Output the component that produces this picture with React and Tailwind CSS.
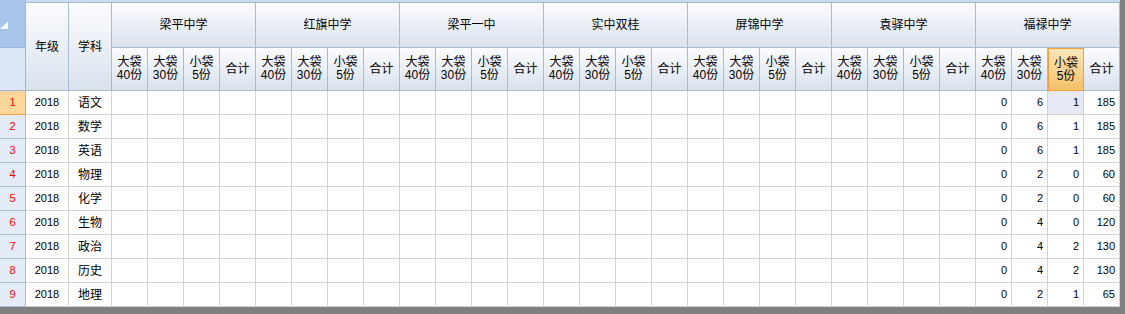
const SCHOOLS = ['梁平中学', '红旗中学', '梁平一中', '实中双桂', '屏锦中学', '袁驿中学', '福禄中学'];

const SUBS = [
    ['大袋', '40份'],
    ['大袋', '30份'],
    ['小袋', '5份'],
    ['合计'],
];

const ROWS = [
    ['语文', 0, 6, 1, 185],
    ['数学', 0, 6, 1, 185],
    ['英语', 0, 6, 1, 185],
    ['物理', 0, 2, 0, 60],
    ['化学', 0, 2, 0, 60],
    ['生物', 0, 4, 0, 120],
    ['政治', 0, 4, 2, 130],
    ['历史', 0, 4, 2, 130],
    ['地理', 0, 2, 1, 65],
];

const FONT = "font-['Liberation_Sans','Noto_Sans_CJK_SC',sans-serif]";
const HEAD = 'bg-gradient-to-b from-[#fbfcfe] to-[#dae2ee] border-r border-b border-[#a6bbd6]';
const HEAD_HOT = 'bg-gradient-to-b from-[#fce6b8] to-[#f5c066] border border-[#f1a038]';
const CELL = 'border-r border-b border-[#d6d2ca]';

function SubHeader({ lines, hot }) {
    return (
        <div className={`flex h-[43px] w-[36px] flex-col items-center justify-center leading-[13px] ${hot ? HEAD_HOT : HEAD}`}>
            {lines.map((l) => <span key={l}>{l}</span>)}
        </div>
    );
}

export default function App() {
    return (
        <div className={`flex h-[314px] w-[1125px] flex-col bg-[#7f7f7f] text-[12px] text-black ${FONT}`}>
            <div className="flex w-[1120px] flex-col bg-white">
                {/* header */}
                <div className="flex">
                    <div className="flex w-[26px] flex-col">
                        <div className="relative h-[48px] border-r border-b border-[#9db5d4] bg-[#a9c4ea]">
                            <svg className="absolute left-0 top-[20px]" width="9" height="10" viewBox="0 0 9 10">
                                <polygon points="0,9 8,9 8,1" fill="#f4f7fb" />
                            </svg>
                        </div>
                        <div className="h-[43px] border-r border-b border-[#9db5d4] bg-[#dde7f5]" />
                    </div>
                    <div className="flex flex-col">
                        <div className="h-[3px] border-b border-[#a6bbd6] bg-[#c9daf1]" />
                        <div className="flex">
                            <div className={`flex h-[88px] w-[43px] items-center justify-center ${HEAD}`}>年级</div>
                            <div className={`flex h-[88px] w-[43px] items-center justify-center ${HEAD}`}>学科</div>
                            {SCHOOLS.map((s, si) => (
                                <div key={s} className="flex w-[144px] flex-col">
                                    <div className={`flex h-[45px] items-center justify-center ${HEAD}`}>{s}</div>
                                    <div className="flex">
                                        {SUBS.map((lines, i) => (
                                            <SubHeader key={i} lines={lines} hot={si === 6 && i === 2} />
                                        ))}
                                    </div>
                                </div>
                            ))}
                        </div>
                    </div>
                </div>

                {/* rows */}
                {ROWS.map(([subject, a, b, c, total], ri) => (
                    <div key={subject} className="flex h-[24px]">
                        <div
                            className={`flex w-[26px] items-center justify-center text-[11px] text-[#ff0000] ${
                                ri === 0 ? 'border-r border-b border-[#f2a544] bg-[#fed89b]' : 'border-r border-b border-[#a7bcd8] bg-[#e3ebf7]'
                            }`}
                        >
                            {ri + 1}
                        </div>
                        <div className={`flex w-[43px] items-center justify-center text-[11px] ${CELL}`}>2018</div>
                        <div className={`flex w-[43px] items-center justify-center ${CELL}`}>{subject}</div>
                        {Array.from({ length: 24 }).map((_, i) => (
                            <div key={i} className={`w-[36px] ${CELL}`} />
                        ))}
                        {[a, b, c, total].map((v, i) => (
                            <div
                                key={i}
                                className={`flex w-[36px] items-center justify-end pr-[4px] text-[11px] ${CELL} ${ri === 0 && i === 2 ? 'bg-[#e6e9f4]' : ''}`}
                            >
                                {v}
                            </div>
                        ))}
                    </div>
                ))}
            </div>
        </div>
    );
}
